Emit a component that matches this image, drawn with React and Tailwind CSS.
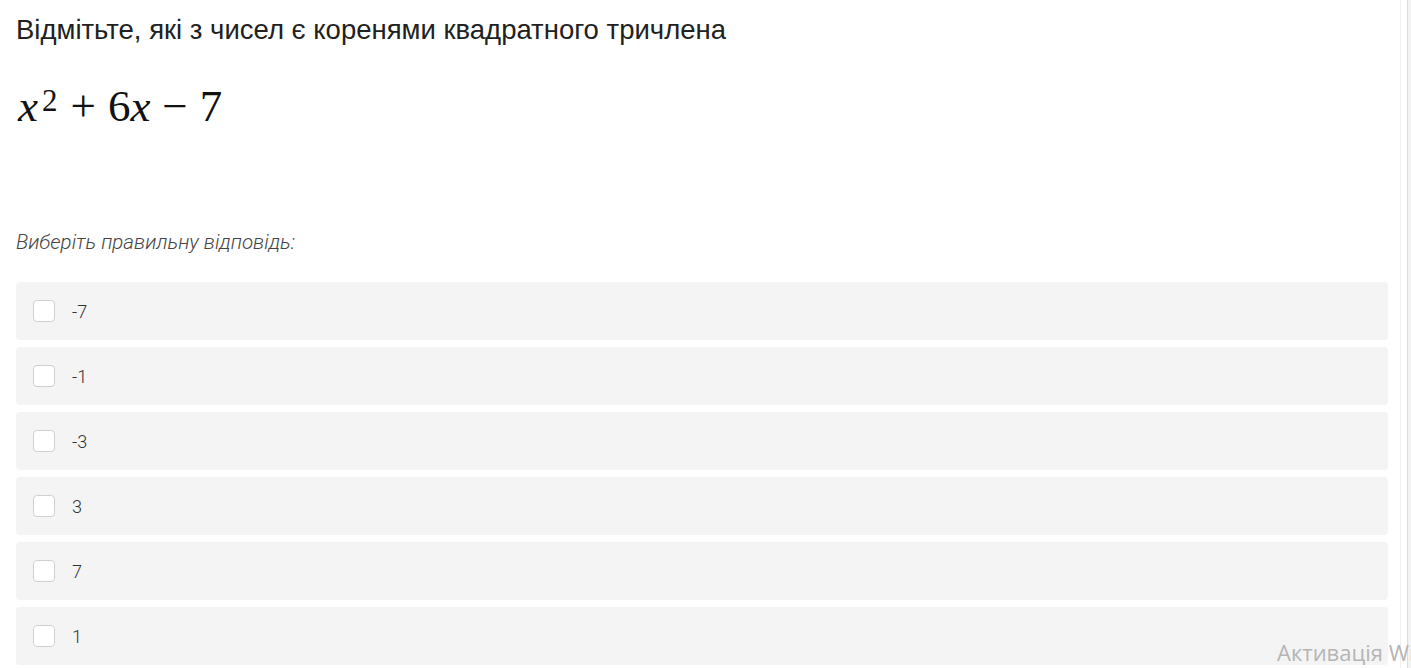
const options = ['-7', '-1', '-3', '3', '7', '1'];

export default function App() {
  return (
    <div className="relative flex h-[668px] w-[1411px] overflow-hidden bg-white">
      <div className="flex-1 pl-4 pr-3 pt-[13px]">
        <h1 className="font-['Liberation_Sans',Arial,sans-serif] text-[27.5px] leading-[34px] text-[#212121]">
          Відмітьте, які з чисел є коренями квадратного тричлена
        </h1>

        <div className="mt-[34px] ml-[2px] flex items-baseline font-['Liberation_Serif',serif] text-[45px] leading-[50px] text-[#111]">
          <span className="italic">x</span>
          <sup className="relative -top-[10px] ml-[4px] text-[31px]">2</sup>
          <span className="ml-[13px]">+</span>
          <span className="ml-[12px]">6</span>
          <span className="italic">x</span>
          <span className="ml-[12px]">−</span>
          <span className="ml-[12px]">7</span>
        </div>

        <p className="mt-[98px] font-['Roboto',sans-serif] text-[20.5px] font-light italic leading-[26px] text-[#444]">
          Виберіть правильну відповідь:
        </p>

        <div className="mt-[27px] flex flex-col gap-[7px]">
          {options.map(o => (
            <label key={o} className="flex h-[58px] items-center rounded-[4px] bg-[#f4f4f4] pl-[17px]">
              <span className="h-[22px] w-[22px] rounded-[4px] border border-[#d0d0d0] bg-white" />
              <span className="ml-[17px] font-['Roboto',sans-serif] text-[18px] font-light text-[#333]">{o}</span>
            </label>
          ))}
        </div>
      </div>

      <div className="flex w-[11px]">
        <div className="w-[7px] border-l border-[#f0f0f0]" />
        <div className="flex-1 border-l border-[#dcdcdc] bg-[#f3f3f3]" />
      </div>

      <div className="pointer-events-none absolute left-[1277px] top-[636px] whitespace-nowrap font-['Open_Sans',sans-serif] text-[22px] text-[#b5b5b5]">
        Активація Windows
      </div>
    </div>
  );
}
